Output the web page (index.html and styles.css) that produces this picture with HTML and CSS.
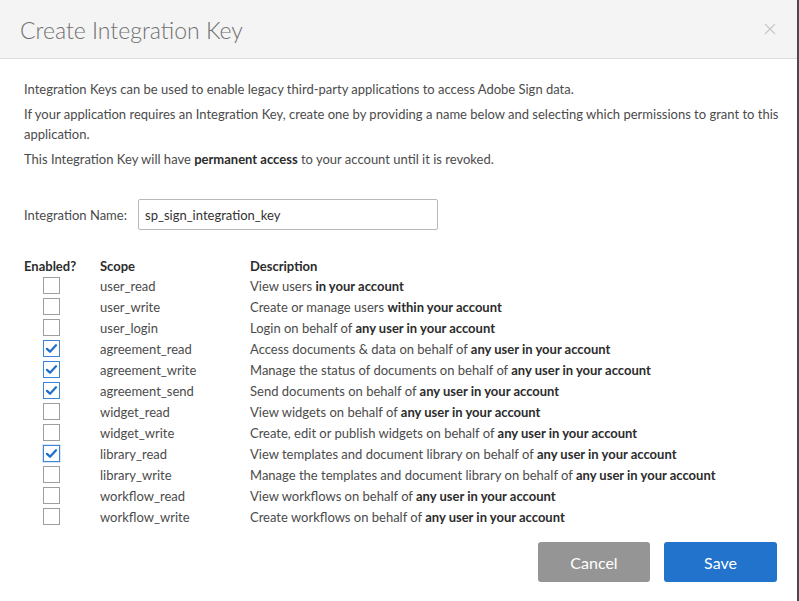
FILE: index.html
```html
<!DOCTYPE html>
<html>
<head>
<meta charset="utf-8">
<link rel="stylesheet" href="styles.css">
</head>
<body>
<div class="modal">
  <div class="header">
    <h1 class="title">Create Integration Key</h1>
    <span class="close">
      <svg width="12" height="12" viewBox="0 0 12 12"><path d="M1 1L11 11M11 1L1 11" stroke="#c8c8c8" stroke-width="1.2" fill="none"/></svg>
    </span>
  </div>
  <div class="body">
    <p class="para">Integration Keys can be used to enable legacy third-party applications to access Adobe Sign data.</p>
    <p class="para">If your application requires an Integration Key, create one by providing a name below and selecting which permissions to grant to this application.</p>
    <p class="para">This Integration Key will have <b>permanent access</b> to your account until it is revoked.</p>

    <div class="name-row">
      <label class="name-label">Integration Name:</label>
      <div class="name-input">sp_sign_integration_key</div>
    </div>

    <div class="table">
      <div class="th">Enabled?</div><div class="th">Scope</div><div class="th">Description</div>

      <div class="cb-cell"><span class="cb"></span></div><div class="scope">user_read</div><div class="desc">View users <b>in your account</b></div>
      <div class="cb-cell"><span class="cb"></span></div><div class="scope">user_write</div><div class="desc">Create or manage users <b>within your account</b></div>
      <div class="cb-cell"><span class="cb"></span></div><div class="scope">user_login</div><div class="desc">Login on behalf of <b>any user in your account</b></div>
      <div class="cb-cell"><span class="cb checked"><svg viewBox="0 0 16 16"><path d="M3.2 8.4L6.4 11.4L12.8 4.6" stroke="#1f6fd0" stroke-width="2.4" fill="none" stroke-linecap="round" stroke-linejoin="round"/></svg></span></div><div class="scope">agreement_read</div><div class="desc">Access documents &amp; data on behalf of <b>any user in your account</b></div>
      <div class="cb-cell"><span class="cb checked"><svg viewBox="0 0 16 16"><path d="M3.2 8.4L6.4 11.4L12.8 4.6" stroke="#1f6fd0" stroke-width="2.4" fill="none" stroke-linecap="round" stroke-linejoin="round"/></svg></span></div><div class="scope">agreement_write</div><div class="desc">Manage the status of documents on behalf of <b>any user in your account</b></div>
      <div class="cb-cell"><span class="cb checked"><svg viewBox="0 0 16 16"><path d="M3.2 8.4L6.4 11.4L12.8 4.6" stroke="#1f6fd0" stroke-width="2.4" fill="none" stroke-linecap="round" stroke-linejoin="round"/></svg></span></div><div class="scope">agreement_send</div><div class="desc">Send documents on behalf of <b>any user in your account</b></div>
      <div class="cb-cell"><span class="cb"></span></div><div class="scope">widget_read</div><div class="desc">View widgets on behalf of <b>any user in your account</b></div>
      <div class="cb-cell"><span class="cb"></span></div><div class="scope">widget_write</div><div class="desc">Create, edit or publish widgets on behalf of <b>any user in your account</b></div>
      <div class="cb-cell"><span class="cb checked focus"><svg viewBox="0 0 16 16"><path d="M3.2 8.4L6.4 11.4L12.8 4.6" stroke="#1f6fd0" stroke-width="2.4" fill="none" stroke-linecap="round" stroke-linejoin="round"/></svg></span></div><div class="scope">library_read</div><div class="desc">View templates and document library on behalf of <b>any user in your account</b></div>
      <div class="cb-cell"><span class="cb"></span></div><div class="scope">library_write</div><div class="desc">Manage the templates and document library on behalf of <b>any user in your account</b></div>
      <div class="cb-cell"><span class="cb"></span></div><div class="scope">workflow_read</div><div class="desc">View workflows on behalf of <b>any user in your account</b></div>
      <div class="cb-cell"><span class="cb"></span></div><div class="scope">workflow_write</div><div class="desc">Create workflows on behalf of <b>any user in your account</b></div>
    </div>

    <div class="actions">
      <button class="btn cancel">Cancel</button>
      <button class="btn save">Save</button>
    </div>
  </div>
</div>
</body>
</html>
```

FILE: styles.css
```css
* { box-sizing: border-box; }
html, body { margin: 0; padding: 0; background: #fff; }
body {
  font-family: Lato, "Liberation Sans", sans-serif;
  font-size: 13px;
  color: #4b4b4b;
}
.modal {
  width: 799px;
  height: 601px;
  border-right: 2px solid #4a4a4a;
  background: #fff;
}
.header {
  height: 59px;
  background: #f4f4f4;
  border-bottom: 1px solid #dcdcdc;
  display: flex;
  align-items: center;
  justify-content: space-between;
  padding: 0 21px 0 20px;
}
.title {
  margin: 0;
  font-weight: 300;
  font-size: 23px;
  color: #707070;
  padding-top: 2px;
}
.close { display: flex; }
.body {
  padding: 20px 18px 0 24px;
}
.para {
  margin: 0 0 5px 0;
  line-height: 20px;
}
.para b { color: #2c2c2c; }
.name-row {
  display: flex;
  align-items: center;
  margin-top: 30px;
}
.name-label { width: 114px; }
.name-input {
  width: 300px;
  height: 31px;
  border: 1px solid #b8b8b8;
  border-radius: 2px;
  padding: 0 6px;
  display: flex;
  align-items: center;
  color: #333;
}
.table {
  margin-top: 27px;
  display: grid;
  grid-template-columns: 76px 150px 1fr;
  grid-template-rows: 18px;
  grid-auto-rows: 21px;
  align-items: center;
}
.th {
  font-weight: 700;
  color: #2c2c2c;
  line-height: 18px;
}
.cb-cell { display: flex; padding-left: 19px; }
.cb {
  width: 17px;
  height: 17px;
  border: 1px solid #9e9e9e;
  background: #fff;
  display: flex;
}
.cb.checked { border-color: #3b84da; }
.cb.focus { box-shadow: 0 0 0 1px #d9e6f5; }
.cb svg { width: 15px; height: 15px; }
.desc b { color: #2c2c2c; }
.actions {
  display: flex;
  justify-content: flex-end;
  gap: 14px;
  margin-top: 15px;
  padding-right: 2px;
}
.btn {
  width: 113px;
  height: 40px;
  border: none;
  border-radius: 3px;
  color: #fff;
  font-family: Lato, "Liberation Sans", sans-serif;
  font-size: 16px;
}
.cancel { width: 112px; background: #959595; }
.save { background: #2273cc; }
```
